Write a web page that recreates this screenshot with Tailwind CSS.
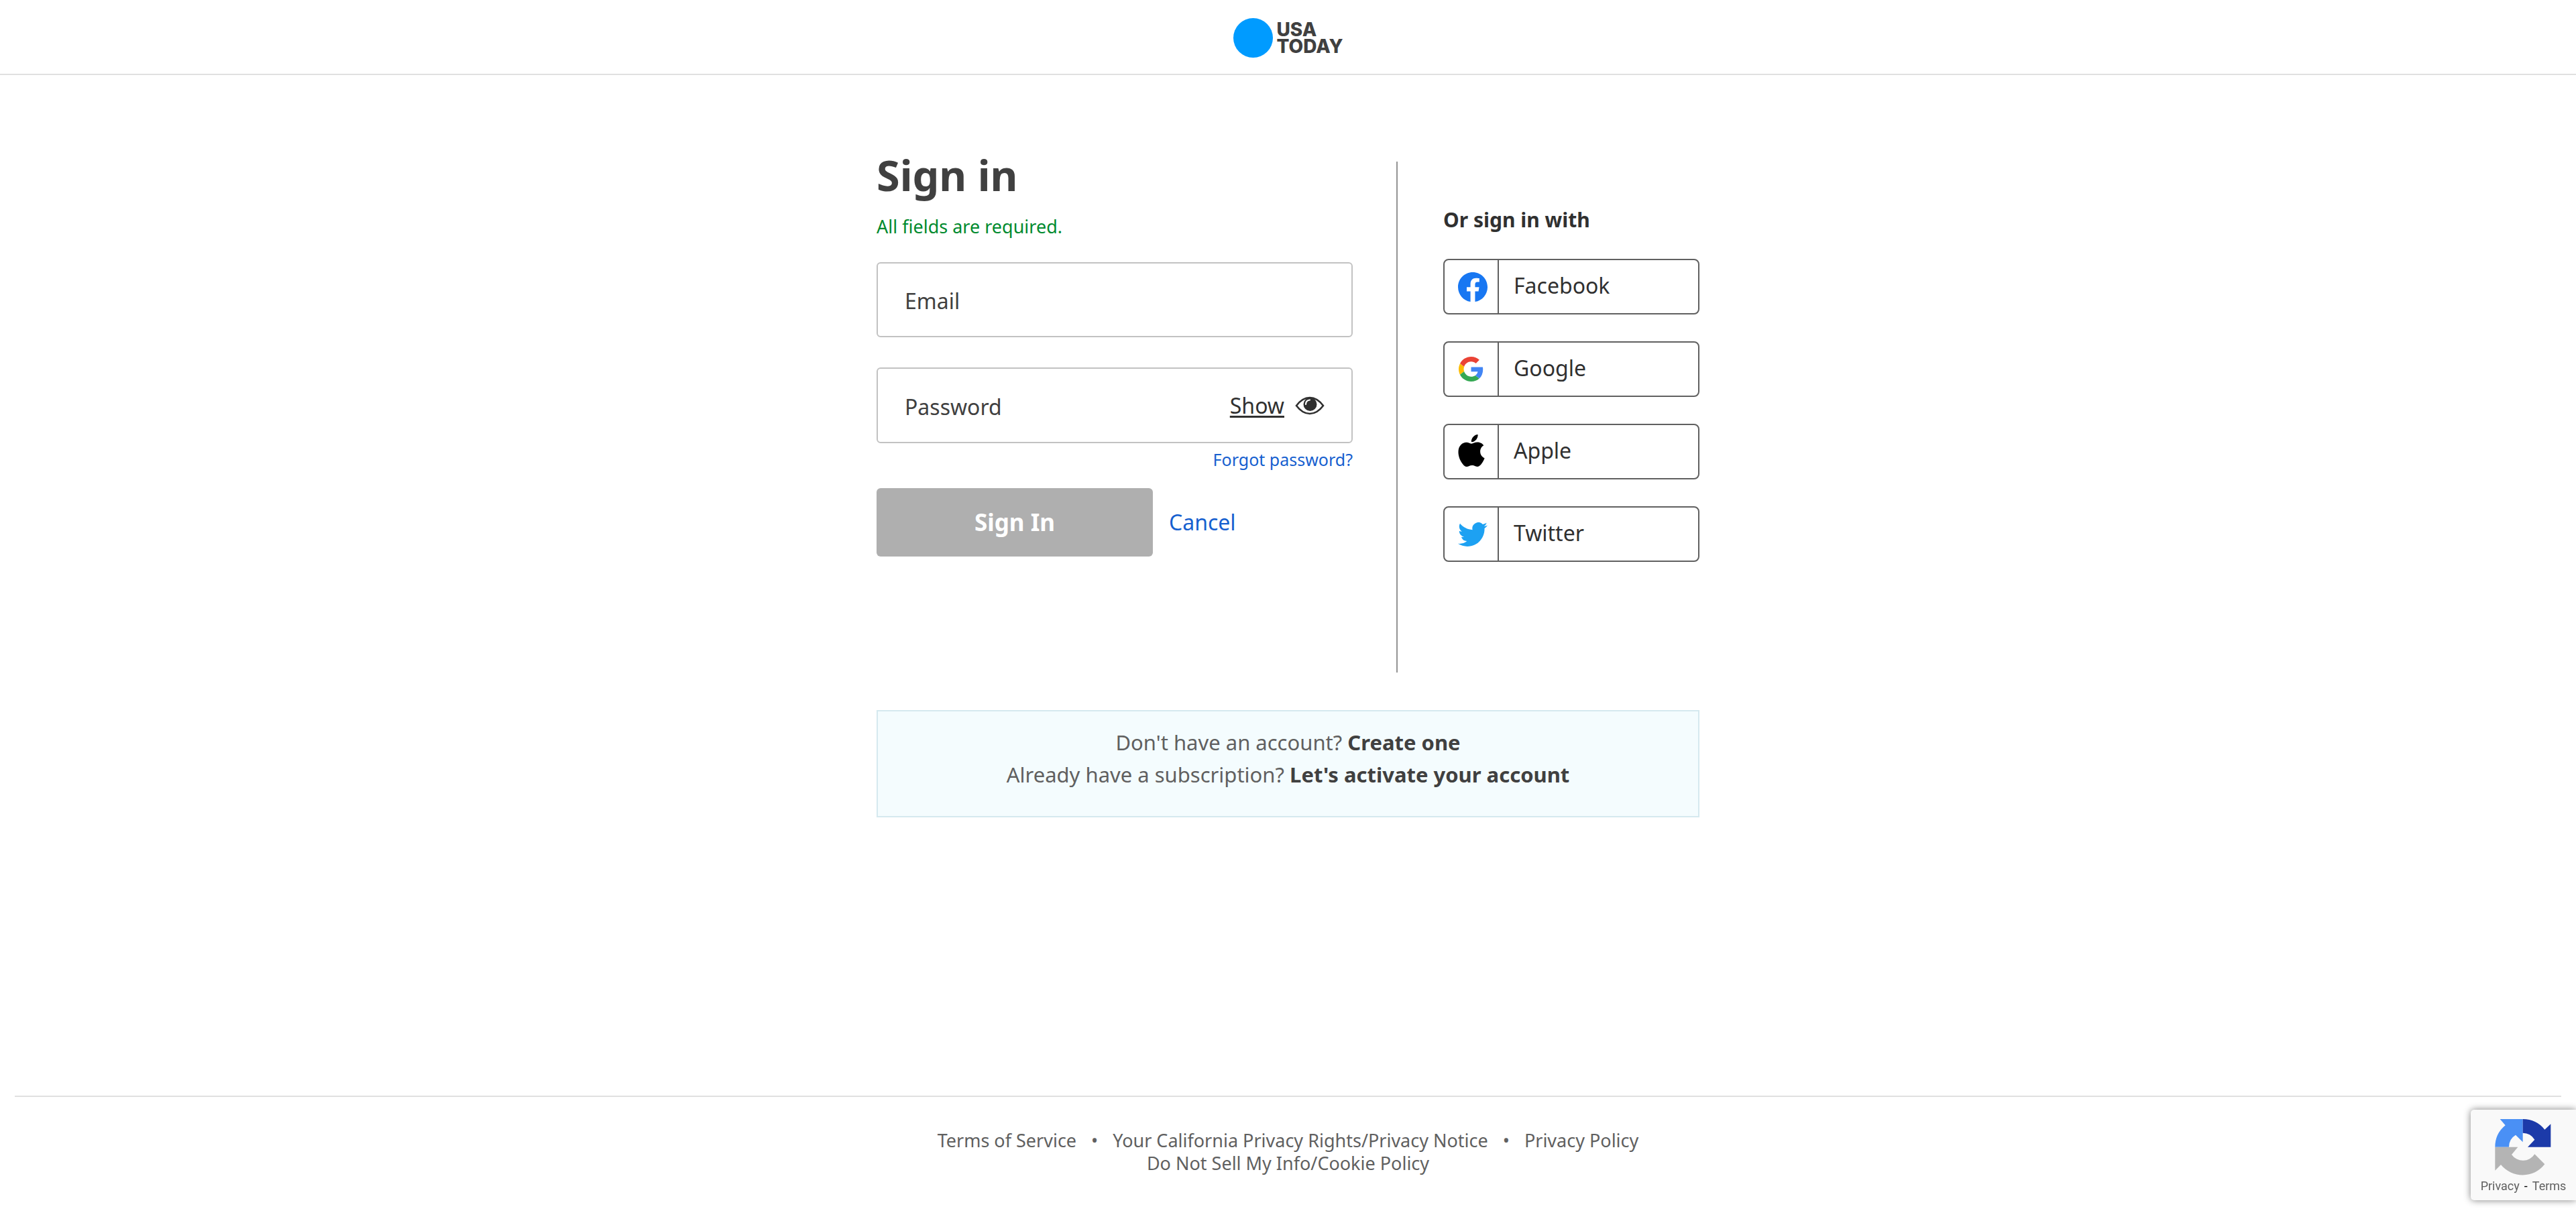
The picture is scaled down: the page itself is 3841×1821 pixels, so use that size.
<!DOCTYPE html>
<html lang="en">
<head>
<meta charset="utf-8">
<title>Sign in</title>
<script src="https://cdn.jsdelivr.net/npm/@tailwindcss/browser@4"></script>
</head>
<body class="flex min-h-screen flex-col bg-white font-['Noto_Sans',sans-serif] text-[32px] leading-[48px] text-[#303030]">
  <header class="flex h-28 items-center justify-center border-b-2 border-[#e0e0e0]">
    <a href="#" class="flex items-center gap-1.5 pt-[3px]">
      <span class="size-[59px] rounded-full bg-[#009bff]"></span>
      <span class="font-['Inter',sans-serif] text-[28px] leading-[25px] font-extrabold text-[#404040]">USA<br>TODAY</span>
    </a>
  </header>

  <main class="mx-auto w-full max-w-[1227px] grow pt-[117px]">
    <div class="flex">
      <form class="min-w-0 flex-1">
        <h1 class="text-[63px] leading-16 font-bold text-[#404040]">Sign in</h1>
        <p class="mt-[27px] text-[27px] leading-9 text-[#008a2e]">All fields are required.</p>
        <div class="mt-[35px] flex h-28 items-center rounded-md border-2 border-[#c2c2c2] px-10">
          <label for="email" class="pt-1 text-[#404040]">Email</label>
          <input id="email" type="email" class="h-full min-w-0 flex-1 pl-4 outline-none">
        </div>
        <div class="mt-[45px] flex h-[113px] items-center rounded-md border-2 border-[#c2c2c2] px-10">
          <label for="password" class="pt-1 text-[#404040]">Password</label>
          <input id="password" type="password" class="h-full min-w-0 flex-1 pl-4 outline-none">
          <button type="button" class="flex items-center gap-4">
            <span class="underline decoration-[3px] underline-offset-[3px]">Show</span>
            <svg class="h-7 w-11" viewBox="0 0 44 28" fill="none">
              <path d="M2 14C8 6 15 2 22 2s14 4 20 12c-6 8-13 12-20 12S8 22 2 14Z" stroke="#303030" stroke-width="2.6"/>
              <circle cx="22.500" cy="12" r="10" fill="#303030"/>
              <path d="M16 12c0-4 2-6 6-6.500" stroke="#fff" stroke-width="2.200" stroke-linecap="round"/>
            </svg>
          </button>
        </div>
        <div class="mt-2 flex justify-end text-[25px] leading-8"><a href="#" class="text-[#1660cf]">Forgot password?</a></div>
        <div class="mt-[27px] flex items-center gap-6">
          <button type="submit" class="h-[102px] w-[412px] rounded-md bg-[#afafaf] text-[35px] font-bold text-white">Sign In</button>
          <a href="#" class="text-[#1660cf]">Cancel</a>
        </div>
      </form>

      <div class="mt-3 mr-[68px] ml-[65px] h-[762px] w-0.5 shrink-0 bg-[#949494]"></div>

      <section class="flex w-[382px] shrink-0 flex-col gap-10 pt-[81px]">
        <h2 class="text-[30px] leading-9 font-bold">Or sign in with</h2>
        <button type="button" class="flex h-[83px] shrink-0 items-center rounded-lg border-2 border-[#606060] text-left">
          <span class="flex h-full w-[81px] shrink-0 items-center justify-center border-r-2 border-[#606060]">
            <svg class="ml-1 size-11" viewBox="0 0 24 24"><path fill="#1877f2" d="M24 12.073C24 5.405 18.627 0 12 0S0 5.405 0 12.073C0 18.100 4.388 23.094 10.125 24v-8.437H7.078v-3.490h3.047v-2.660c0-3.025 1.792-4.697 4.533-4.697 1.312 0 2.686.236 2.686.236v2.971H15.830c-1.491 0-1.956.930-1.956 1.886v2.264h3.328l-.532 3.490h-2.796V24C19.612 23.094 24 18.100 24 12.073z"/></svg>
          </span>
          <span class="pb-1 pl-[22px]">Facebook</span>
        </button>
        <button type="button" class="flex h-[83px] shrink-0 items-center rounded-lg border-2 border-[#606060] text-left">
          <span class="flex h-full w-[81px] shrink-0 items-center justify-center border-r-2 border-[#606060]">
            <svg class="size-[37px]" viewBox="0 0 48 48">
              <path fill="#ea4335" d="M24 9.500c3.540 0 6.710 1.220 9.210 3.600l6.850-6.850C35.900 2.380 30.470 0 24 0 14.620 0 6.510 5.380 2.560 13.220l7.980 6.190C12.430 13.720 17.740 9.500 24 9.500z"/>
              <path fill="#4285f4" d="M46.980 24.550c0-1.570-.150-3.090-.380-4.550H24v9.020h12.940c-.580 2.960-2.260 5.480-4.780 7.180l7.730 6c4.510-4.180 7.090-10.360 7.090-17.650z"/>
              <path fill="#fbbc05" d="M10.530 28.590c-.480-1.450-.760-2.990-.760-4.590s.270-3.140.760-4.590l-7.980-6.190C.920 16.460 0 20.120 0 24s.920 7.540 2.560 10.780l7.970-6.190z"/>
              <path fill="#34a853" d="M24 48c6.480 0 11.930-2.130 15.890-5.810l-7.730-6c-2.150 1.450-4.920 2.300-8.160 2.300-6.260 0-11.570-4.220-13.470-9.910l-7.980 6.190C6.510 42.620 14.620 48 24 48z"/>
            </svg>
          </span>
          <span class="pb-1 pl-[22px]">Google</span>
        </button>
        <button type="button" class="flex h-[83px] shrink-0 items-center rounded-lg border-2 border-[#606060] text-left">
          <span class="flex h-full w-[81px] shrink-0 items-center justify-center border-r-2 border-[#606060]">
            <svg class="mb-1 h-12 w-10" viewBox="0 0 814 1000"><path d="M788.100 340.900c-5.800 4.500-108.200 62.200-108.200 190.500 0 148.400 130.300 200.900 134.200 202.200-.6 3.200-20.700 71.900-68.700 141.900-42.800 61.600-87.500 123.100-155.500 123.100s-85.500-39.500-164-39.500c-76.500 0-103.700 40.800-165.900 40.800s-105.600-57-155.500-127C46.700 790.700 0 663 0 541.800c0-194.400 126.400-297.500 250.800-297.500 66.100 0 121.200 43.400 162.700 43.400 39.500 0 101.100-46 176.300-46 28.500 0 130.900 2.600 198.300 99.200zm-234-181.500c31.100-36.900 53.100-88.100 53.100-139.300 0-7.100-.6-14.300-1.900-20.100-50.600 1.900-110.800 33.700-147.100 75.800-28.500 32.400-55.100 83.600-55.100 135.500 0 7.800 1.300 15.600 1.900 18.100 3.200.6 8.400 1.300 13.600 1.300 45.400 0 102.500-30.400 135.500-71.300z"/></svg>
          </span>
          <span class="pb-1 pl-[22px]">Apple</span>
        </button>
        <button type="button" class="flex h-[83px] shrink-0 items-center rounded-lg border-2 border-[#606060] text-left">
          <span class="flex h-full w-[81px] shrink-0 items-center justify-center border-r-2 border-[#606060]">
            <svg class="ml-1 h-9 w-11" viewBox="0 2.200 24 19.600"><path fill="#1da1f2" d="M23.953 4.570a10 10 0 01-2.825.775 4.958 4.958 0 002.163-2.723c-.951.555-2.005.959-3.127 1.184a4.920 4.920 0 00-8.384 4.482C7.690 8.095 4.067 6.130 1.640 3.162a4.822 4.822 0 00-.666 2.475c0 1.710.870 3.213 2.188 4.096a4.904 4.904 0 01-2.228-.616v.060a4.923 4.923 0 003.946 4.827 4.996 4.996 0 01-2.212.085 4.936 4.936 0 004.604 3.417 9.867 9.867 0 01-6.102 2.105c-.390 0-.779-.023-1.170-.067a13.995 13.995 0 007.557 2.209c9.053 0 13.998-7.496 13.998-13.985 0-.210 0-.420-.015-.630A9.935 9.935 0 0024 4.590z"/></svg>
          </span>
          <span class="pb-1 pl-[22px]">Twitter</span>
        </button>
      </section>
    </div>

    <section class="mt-14 border-2 border-[#d5e9ef] bg-[#f4fcfe] pt-[22px] pb-[38px] text-center text-[31px] text-[#606060]">
      <p>Don't have an account? <a href="#" class="font-bold text-[#404040]">Create one</a></p>
      <p>Already have a subscription? <a href="#" class="font-bold text-[#404040]">Let's activate your account</a></p>
    </section>
  </main>

  <footer class="mx-[22px] flex flex-col items-center border-t-2 border-[#e0e0e0] pt-12 pb-[69px] text-[27px] leading-[34px] text-[#606060]">
    <div class="flex gap-[22px]">
      <a href="#">Terms of Service</a><span>•</span><a href="#">Your California Privacy Rights/Privacy Notice</a><span>•</span><a href="#">Privacy Policy</a>
    </div>
    <a href="#">Do Not Sell My Info/Cookie Policy</a>
  </footer>

  <aside class="fixed right-0 bottom-[31px] flex h-[135px] w-[157px] flex-col items-center rounded-l-[5px] bg-[#f9f9f9] pt-3.5 font-['Roboto',sans-serif] text-[18px] leading-6 text-[#606060] shadow-[0_0_11px_gray]">
    <svg class="mr-0.5 size-[84px]" viewBox="245 179 250 252">
      <path fill="#4a90f5" d="M245 304A125 125 0 0 1 291 207L267 179H369V282L337 250A62 62 0 0 0 307 304Z"/>
      <path fill="#1c3aa9" d="M369 179A125 125 0 0 1 467 226L494 201V304H391L422 271A62 62 0 0 0 369 241Z"/>
      <path fill="#b4b4b4" d="M245 304H347L319 338A62 62 0 0 0 422 336L467 381A125 125 0 0 1 271 383L245 409Z"/>
    </svg>
    <div class="mt-1 flex gap-[7px]"><a href="#">Privacy</a><span class="text-black">-</span><a href="#">Terms</a></div>
  </aside>
</body>
</html>
